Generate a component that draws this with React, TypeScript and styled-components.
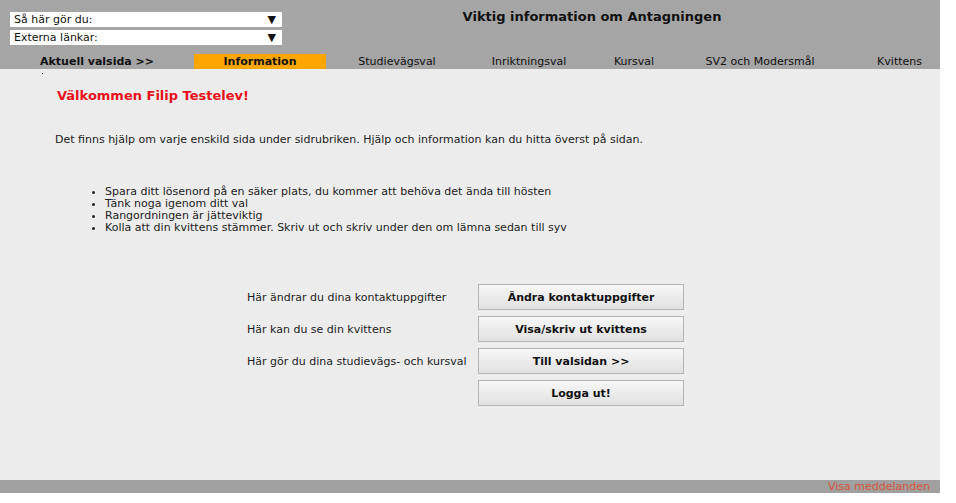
import React from "react";
import styled, { createGlobalStyle } from "styled-components";

const Global = createGlobalStyle`
  body { margin: 0; background: #fff; font-family: "DejaVu Sans", Verdana, sans-serif; font-size: 11px; color: #222; }
`;

const Page = styled.div`
  width: 940px;
`;

const Header = styled.div`
  background: #a5a5a5;
  height: 69px;
  display: flex;
  flex-direction: column;
`;

const TopRow = styled.div`
  display: flex;
  padding: 12px 0 0 10px;
  height: 42px;
`;

const Selects = styled.div`
  display: flex;
  flex-direction: column;
  gap: 3px;
  width: 272px;
`;

const FakeSelect = styled.div`
  background: #fff;
  height: 15px;
  line-height: 15px;
  padding: 0 6px 0 4px;
  display: flex;
  justify-content: space-between;
  font-size: 11px;
  color: #111;
`;

const Title = styled.div`
  flex: 1;
  text-align: center;
  font-weight: bold;
  font-size: 13px;
  color: #111;
  padding-right: 38px;
  line-height: 9px;
`;

const Nav = styled.div`
  display: flex;
  height: 15px;
  align-items: stretch;
`;

const NavItem = styled.div<{ $w: number; $active?: boolean; $bold?: boolean; $right?: boolean }>`
  width: ${p => p.$w}px;
  box-sizing: border-box;
  text-align: ${p => (p.$right ? "right" : "center")};
  padding-right: ${p => (p.$right ? "18px" : "0")};
  line-height: 16px;
  font-weight: ${p => (p.$bold || p.$active ? "bold" : "normal")};
  background: ${p => (p.$active ? "#ffa500" : "transparent")};
  color: #111;
  white-space: nowrap;
`;

const Content = styled.div`
  background: #ececec;
  height: 411px;
  padding: 4px 0 0 42px;
  box-sizing: border-box;
`;

const Dot = styled.div`
  width: 1px; height: 1px; background: #333; margin-bottom: 14px;
`;

const Welcome = styled.h1`
  margin: 0 0 30px 15px;
  color: #e8101a;
  font-size: 13px;
  font-weight: bold;
`;

const Para = styled.p`
  margin: 0 0 40px 13px;
  font-size: 11px;
`;

const List = styled.ul`
  margin: 0 0 50px 0;
  padding-left: 63px;
  font-size: 11px;
  line-height: 12px;
`;

const Actions = styled.div`
  display: grid;
  grid-template-columns: 231px 206px;
  row-gap: 6px;
  margin-left: 205px;
  align-items: center;
`;

const Label = styled.div`
  font-size: 11px;
`;

const Button = styled.button`
  height: 26px;
  border: 1px solid #b4b4b4;
  background: linear-gradient(#f7f7f7, #e1e1e1);
  font-family: inherit;
  font-weight: bold;
  font-size: 11px;
  color: #111;
`;

const Footer = styled.div`
  background: #a0a0a0;
  height: 13px;
  text-align: right;
  padding-right: 10px;
  color: #d6553a;
  font-size: 11px;
  line-height: 14px;
`;

const navItems: [string, number, boolean?, boolean?][] = [
  ["Aktuell valsida >>", 194, false, true],
  ["Information", 132, true],
  ["Studievägsval", 142],
  ["Inriktningsval", 122],
  ["Kursval", 88],
  ["SV2 och Modersmål", 164],
  ["Kvittens", 98],
];

export default function App() {
  return (
    <Page>
      <Global />
      <Header>
        <TopRow>
          <Selects>
            <FakeSelect><span>Så här gör du:</span><span>▼</span></FakeSelect>
            <FakeSelect><span>Externa länkar:</span><span>▼</span></FakeSelect>
          </Selects>
          <Title>Viktig information om Antagningen</Title>
        </TopRow>
        <Nav>
          {navItems.map(([t, w, a, b], i) => (
            <NavItem key={t} $w={w} $active={a} $bold={b} $right={i === navItems.length - 1}>{t}</NavItem>
          ))}
        </Nav>
      </Header>
      <Content>
        <Dot />
        <Welcome>Välkommen Filip Testelev!</Welcome>
        <Para>Det finns hjälp om varje enskild sida under sidrubriken. Hjälp och information kan du hitta överst på sidan.</Para>
        <List>
          <li>Spara ditt lösenord på en säker plats, du kommer att behöva det ända till hösten</li>
          <li>Tänk noga igenom ditt val</li>
          <li>Rangordningen är jätteviktig</li>
          <li>Kolla att din kvittens stämmer. Skriv ut och skriv under den om lämna sedan till syv</li>
        </List>
        <Actions>
          <Label>Här ändrar du dina kontaktuppgifter</Label>
          <Button>Ändra kontaktuppgifter</Button>
          <Label>Här kan du se din kvittens</Label>
          <Button>Visa/skriv ut kvittens</Button>
          <Label>Här gör du dina studievägs- och kursval</Label>
          <Button>Till valsidan &gt;&gt;</Button>
          <span />
          <Button>Logga ut!</Button>
        </Actions>
      </Content>
      <Footer>Visa meddelanden</Footer>
    </Page>
  );
}
